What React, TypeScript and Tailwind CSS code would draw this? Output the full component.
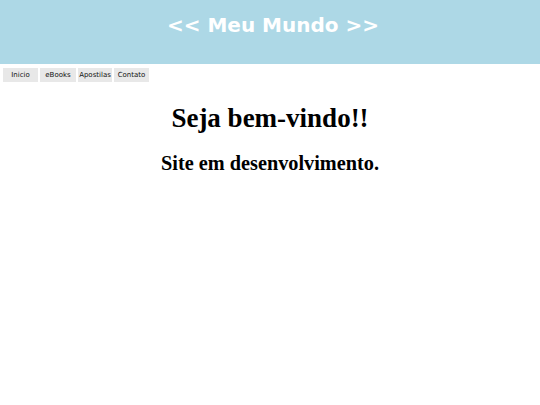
export default function App() {
  const links = [
    { label: "Inicio", w: "w-[35px]" },
    { label: "eBooks", w: "w-[36px]" },
    { label: "Apostilas", w: "w-[34px]" },
    { label: "Contato", w: "w-[35px]" },
  ];
  return (
    <div className="min-h-screen bg-white">
      {/* Header */}
      <header className="h-[64px] bg-[#add8e6] flex justify-center pt-[12px] pl-[6px]">
        <h1 className="text-[20px] leading-[26px] font-bold text-white font-['DejaVu_Sans',sans-serif]">
          &lt;&lt; Meu Mundo &gt;&gt;
        </h1>
      </header>

      {/* Menu */}
      <nav className="flex gap-[2px] pl-[3px] pt-[4px]">
        {links.map((l) => (
          <a
            key={l.label}
            href="#"
            className={`${l.w} h-[14px] bg-[#e8e8e8] flex items-center justify-center text-[7px] text-[#111] font-['DejaVu_Sans',sans-serif]`}
          >
            {l.label}
          </a>
        ))}
      </nav>

      <main className="text-center font-['Liberation_Serif',serif] text-black">
        <h2 className="text-[27px] leading-[32px] font-bold mt-[20px]">Seja bem-vindo!!</h2>
        <h3 className="text-[20.3px] leading-[24px] font-bold mt-[17px]">Site em desenvolvimento.</h3>
      </main>
    </div>
  );
}
